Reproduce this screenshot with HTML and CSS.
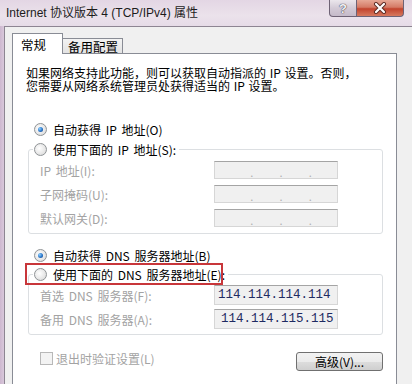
FILE: index.html
```html
<!DOCTYPE html>
<html lang="zh-CN">
<head>
    <meta charset="UTF-8">
    <title>Internet 协议版本 4 (TCP/IPv4) 属性</title>
    <link rel="stylesheet" href="styles.css">
</head>
<body>

    <div class="window">
        <!-- Title bar -->
        <div class="titlebar">
            <span class="title">Internet 协议版本 4 (TCP/IPv4) 属性</span>
            <div class="caption-buttons">
                <span class="cap-btn help">?</span>
                <span class="cap-btn close">
                    <svg width="14" height="12" viewBox="0 0 14 12">
                        <path d="M3 2 L11 10 M11 2 L3 10" stroke="#5a2a22" stroke-width="4" stroke-linecap="round"/>
                        <path d="M3 2 L11 10 M11 2 L3 10" stroke="#ffffff" stroke-width="2.2" stroke-linecap="round"/>
                    </svg>
                </span>
            </div>
        </div>

        <div class="frame">
            <!-- Tabs -->
            <div class="tabs">
                <span class="tab active">常规</span>
                <span class="tab">备用配置</span>
            </div>

            <div class="tab-body">
                <p class="intro">如果网络支持此功能，则可以获取自动指派的 IP 设置。否则，<br>您需要从网络系统管理员处获得适当的 IP 设置。</p>

                <div class="radio-row ip-auto"><span class="radio checked"></span>自动获得 IP 地址(O)</div>

                <fieldset class="group">
                    <legend class="radio-row"><span class="radio"></span>使用下面的 IP 地址(S):</legend>
                    <div class="field-row">
                        <span class="label">IP 地址(I):</span>
                        <span class="ip-box"><i>.</i><i>.</i><i>.</i></span>
                    </div>
                    <div class="field-row">
                        <span class="label">子网掩码(U):</span>
                        <span class="ip-box"><i>.</i><i>.</i><i>.</i></span>
                    </div>
                    <div class="field-row">
                        <span class="label">默认网关(D):</span>
                        <span class="ip-box"><i>.</i><i>.</i><i>.</i></span>
                    </div>
                </fieldset>

                <div class="radio-row dns-auto"><span class="radio checked"></span>自动获得 DNS 服务器地址(B)</div>

                <fieldset class="group dns-group">
                    <legend class="radio-row marked"><span class="radio"></span>使用下面的 DNS 服务器地址(E):<span class="highlight"></span></legend>
                    <div class="field-row">
                        <span class="label">首选 DNS 服务器(F):</span>
                        <span class="ip-box filled">114.114.114.114</span>
                    </div>
                    <div class="field-row">
                        <span class="label">备用 DNS 服务器(A):</span>
                        <span class="ip-box filled second">114.114.115.115</span>
                    </div>
                </fieldset>

                <div class="footer-row">
                    <span class="check-row"><span class="checkbox"></span>退出时验证设置(L)</span>
                    <button class="btn">高级(V)...</button>
                </div>
            </div>
        </div>
    </div>

</body>
</html>
```

FILE: styles.css
```css
body {
    margin: 0;
    width: 412px;
    height: 384px;
    overflow: hidden;
    font-family: "Noto Sans CJK SC", sans-serif;
    font-size: 12px;
    word-spacing: 2px;
    background: linear-gradient(90deg, #cdb7cf 0, #d9c8db 4px, #e4d8e5 40%, #dccbde 100%);
}
.window {
    display: flex;
    flex-direction: column;
}

/* title bar */
.titlebar {
    height: 26px;
    display: flex;
    justify-content: space-between;
    align-items: flex-start;
    background: linear-gradient(180deg, #e3d6e4 0, #ebe2eb 60%, #e6dbe7 100%);
}
.title {
    font-family: "Liberation Sans", "Noto Sans CJK SC", sans-serif;
    font-size: 12px;
    word-spacing: 0;
    color: #1c1c1c;
    padding-left: 6px;
    line-height: 26px;
}
.caption-buttons {
    display: flex;
    margin-right: 8px;
}
.cap-btn {
    height: 16px;
    display: flex;
    align-items: center;
    justify-content: center;
    border: 1px solid #6e6275;
    border-top: none;
}
.help {
    width: 26px;
    border-bottom-left-radius: 4px;
    background: linear-gradient(180deg, #ebe6ec 0, #d3cad6 50%, #c5bac9 100%);
    color: #f4f2f5;
    font-family: "Liberation Sans", sans-serif;
    font-weight: bold;
    font-size: 13px;
    text-shadow: 0 0 1px #3a3340, 0 0 1px #3a3340;
}
.close {
    width: 46px;
    border-left: none;
    border-bottom-right-radius: 4px;
    background: linear-gradient(180deg, #e7a896 0, #d57a66 45%, #c2432d 55%, #d77a5f 100%);
}

/* frame and tabs */
.frame {
    margin-left: 4px;
    width: 398px;
    height: 400px;
    border: 1px solid #8d8592;
    background: #f0f0f0;
    padding: 6px 6px 0 7px;
}
.tabs {
    display: flex;
    align-items: flex-end;
    margin-bottom: -1px;
    position: relative;
    z-index: 1;
}
.tab {
    height: 14px;
    line-height: 15px;
    padding: 0 4px 0 5px;
    margin-bottom: 1px;
    border: 1px solid #898c95;
    border-bottom: none;
    border-left: none;
    background: linear-gradient(180deg, #f3f3f3, #e3e3e3);
    font-size: 12.5px;
}
.tab.active {
    height: 20px;
    line-height: 22px;
    width: 41px;
    padding: 0 0 0 8px;
    margin-bottom: 0;
    border-left: 1px solid #898c95;
    background: #fff;
}
.tab-body {
    width: 357px;
    height: 360px;
    border: 1px solid #898c95;
    background: #fff;
    padding: 12px 13px 0 13px;
}

.intro {
    margin: 0;
    line-height: 13px;
    word-spacing: 1px;
}

/* radios */
.radio-row {
    display: flex;
    align-items: center;
    height: 18px;
}
.radio {
    width: 11px;
    height: 11px;
    border-radius: 50%;
    border: 1px solid #8f9396;
    background: radial-gradient(circle at 40% 40%, #ffffff 0, #e6e6e6 60%, #d2d2d2 100%);
    margin: 0 6px 0 8px;
    position: relative;
}
.radio.checked::after {
    content: "";
    position: absolute;
    left: 3px;
    top: 3px;
    width: 5px;
    height: 5px;
    border-radius: 50%;
    background: radial-gradient(circle at 35% 35%, #8fd0ff 0, #2a76c9 55%, #123f80 100%);
}
.ip-auto {
    margin-top: 28px;
}
.dns-auto {
    margin-top: 12px;
}

/* group boxes */
.group {
    margin: 2px 0 0 2px;
    padding: 0 0 3px 4px;
    border: 1px solid #dcdfe2;
    border-radius: 3px;
}
.dns-group {
    margin-top: 1px;
}
.group legend {
    padding: 0 3px 0 0;
}
.group legend .radio {
    margin-left: 1px;
}
.marked {
    position: relative;
}
.field-row {
    display: flex;
    align-items: center;
    height: 24px;
    padding-left: 7px;
}
.label {
    width: 174px;
    color: #a3a3a3;
}
.ip-box {
    height: 16px;
    border: 1px solid #d6d6d6;
    border-top-color: #a4a4a4;
    background: #f0f0f0;
    display: flex;
    justify-content: space-around;
    align-items: flex-end;
    padding: 0 12px 0 22px;
    width: 88px;
}
.ip-box i {
    font-style: normal;
    color: #b0b0b0;
    font-size: 11px;
    line-height: 12px;
}
.ip-box.filled {
    width: 119px;
    padding: 0 0 0 3px;
    height: 18px;
    justify-content: flex-start;
    align-items: center;
    font-family: "Liberation Mono", monospace;
    font-size: 12.5px;
    word-spacing: 0;
    color: #1e2a62;
}
.ip-box.second {
    padding-left: 6px;
    width: 116px;
}

/* red annotation */
.highlight {
    position: absolute;
    left: -8px;
    top: -2px;
    width: 194px;
    height: 18px;
    border: 2px solid #c8363a;
}

/* footer */
.footer-row {
    display: flex;
    justify-content: space-between;
    align-items: flex-start;
    margin-top: 17px;
}
.check-row {
    display: flex;
    align-items: center;
    color: #a3a3a3;
    height: 12px;
}
.checkbox {
    width: 11px;
    height: 11px;
    border: 1px solid #b8b8b8;
    background: #f3f3f3;
    margin: 0 3px 0 14px;
}
.btn {
    width: 87px;
    height: 19px;
    padding: 0;
    font-family: "Noto Sans CJK SC", sans-serif;
    font-size: 12px;
    line-height: 16px;
    color: #000;
    border: 1px solid #707070;
    border-radius: 3px;
    background: linear-gradient(180deg, #f2f2f2 0, #ebebeb 50%, #dddddd 51%, #cfcfcf 100%);
}
```
